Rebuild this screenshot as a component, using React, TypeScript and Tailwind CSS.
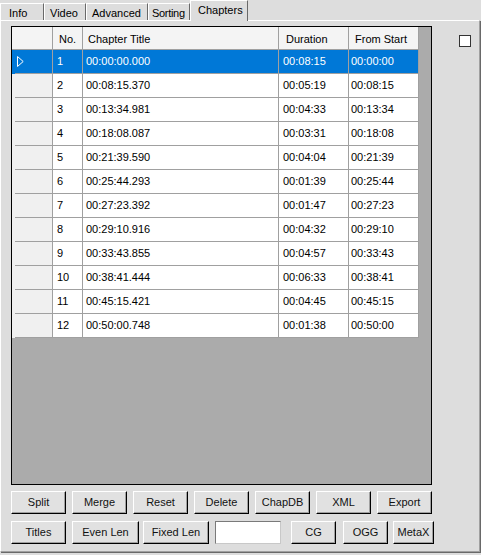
import React from 'react';

const rows = [
  ['1', '00:00:00.000', '00:08:15', '00:00:00'],
  ['2', '00:08:15.370', '00:05:19', '00:08:15'],
  ['3', '00:13:34.981', '00:04:33', '00:13:34'],
  ['4', '00:18:08.087', '00:03:31', '00:18:08'],
  ['5', '00:21:39.590', '00:04:04', '00:21:39'],
  ['6', '00:25:44.293', '00:01:39', '00:25:44'],
  ['7', '00:27:23.392', '00:01:47', '00:27:23'],
  ['8', '00:29:10.916', '00:04:32', '00:29:10'],
  ['9', '00:33:43.855', '00:04:57', '00:33:43'],
  ['10', '00:38:41.444', '00:06:33', '00:38:41'],
  ['11', '00:45:15.421', '00:04:45', '00:45:15'],
  ['12', '00:50:00.748', '00:01:38', '00:50:00'],
];

const tabs = [
  { label: 'Info', cls: 'w-[44px] pl-[8px]' },
  { label: 'Video', cls: 'w-[42px] pl-[5px]' },
  { label: 'Advanced', cls: 'w-[62px] pl-[5px]' },
  { label: 'Sorting', cls: 'w-[42px] pl-[3px] tracking-[-0.3px]' },
];

const Btn: React.FC<{ label: string; className: string }> = ({ label, className }) => (
  <div
    className={`h-[23px] flex items-center justify-center bg-[#e1e1e1] border border-t-white border-l-white border-r-black border-b-black shadow-[inset_-1px_-1px_0_#a0a0a0] text-[#111] ${className}`}
  >
    {label}
  </div>
);

export default function App() {
  return (
    <div
      className="w-[481px] h-[555px] bg-[#dddddd] text-[11px] leading-none text-black overflow-hidden"
      style={{ fontFamily: '"Liberation Sans", Arial, sans-serif' }}
    >
      {/* tab strip */}
      <div className="flex items-end h-[20px]">
        {tabs.map((t) => (
          <div
            key={t.label}
            className={`h-[17px] pt-[4px] whitespace-nowrap overflow-hidden border-t border-t-white border-r border-r-[#696969] border-l border-l-white ${t.cls}`}
          >
            {t.label}
          </div>
        ))}
        <div className="relative z-10 -mb-px h-[21px] w-[58px] pl-[7px] pt-[4px] bg-[#dddddd] border-t border-l border-t-white border-l-white border-r border-r-[#696969]">
          Chapters
        </div>
      </div>

      {/* tab page */}
      <div className="w-[480px] h-[532px] border border-t-white border-l-white border-r-[#a0a0a0] border-b-[#a0a0a0] shadow-[1px_1px_0_#696969] pl-[10px] pt-[5px]">
        <div className="flex">
          {/* grid */}
          <div className="w-[421px] h-[459px] border border-black bg-[#ababab]">
            <div className="w-[407px]">
              <div className="flex h-[23px] bg-[#f4f4f4] border-b border-[#a0a0a0]">
                <div className="w-[41px] border-r border-[#a0a0a0]" />
                <div className="w-[30px] border-r border-[#a0a0a0] pl-[6px] pt-[7px]">No.</div>
                <div className="w-[196px] border-r border-[#a0a0a0] pl-[5px] pt-[7px]">Chapter Title</div>
                <div className="w-[70px] border-r border-[#a0a0a0] pl-[7px] pt-[7px]">Duration</div>
                <div className="w-[70px] border-r border-[#a0a0a0] pl-[6px] pt-[7px]">From Start</div>
              </div>
              {rows.map((r, i) => {
                const sel = i === 0;
                const cell = sel
                  ? 'bg-[#0078d7] text-white border-r border-b border-[#a0a0a0]'
                  : 'bg-white border-r border-b border-[#a0a0a0]';
                return (
                  <div key={r[0]} className="flex h-[24px]">
                    <div
                      className={`w-[41px] border-r border-[#a0a0a0] ${sel ? 'bg-[#0078d7]' : 'bg-[#f0f0f0]'}`}
                    >
                      <div className="ml-[3px] h-full border-b border-[#a0a0a0] flex items-center pl-[2px]">
                        {sel && (
                          <svg width="7" height="11" viewBox="0 0 7 11">
                            <polygon points="0.5,0.5 6.2,5.5 0.5,10.5" fill="none" stroke="white" strokeWidth="1" />
                          </svg>
                        )}
                      </div>
                    </div>
                    <div className={`w-[30px] pl-[4px] flex items-center ${cell}`}>{r[0]}</div>
                    <div className={`w-[196px] pl-[3px] flex items-center ${cell}`}>{r[1]}</div>
                    <div className={`w-[70px] pl-[4px] flex items-center ${cell}`}>{r[2]}</div>
                    <div className={`w-[70px] pl-[2px] flex items-center ${cell}`}>{r[3]}</div>
                  </div>
                );
              })}
            </div>
          </div>
          {/* checkbox */}
          <div className="ml-[27px] mt-[9px] w-[12px] h-[12px] bg-white border border-[#333333]" />
        </div>

        {/* buttons row 1 */}
        <div className="flex gap-[6px] mt-[6px]">
          {['Split', 'Merge', 'Reset', 'Delete', 'ChapDB', 'XML', 'Export'].map((b) => (
            <Btn key={b} label={b} className="w-[55px]" />
          ))}
        </div>

        {/* buttons row 2 */}
        <div className="flex mt-[7px]">
          <Btn label="Titles" className="w-[55px]" />
          <Btn label="Even Len" className="w-[67px] ml-[6px]" />
          <Btn label="Fixed Len" className="w-[66px] ml-[4px]" />
          <div className="w-[66px] h-[23px] ml-[6px] bg-white border border-t-[#7a7a7a] border-l-[#7a7a7a] border-r-[#c8c8c8] border-b-[#c8c8c8]" />
          <Btn label="CG" className="w-[45px] ml-[10px]" />
          <Btn label="OGG" className="w-[45px] ml-[7px]" />
          <Btn label="MetaX" className="w-[41px] ml-[5px]" />
        </div>
      </div>
    </div>
  );
}
